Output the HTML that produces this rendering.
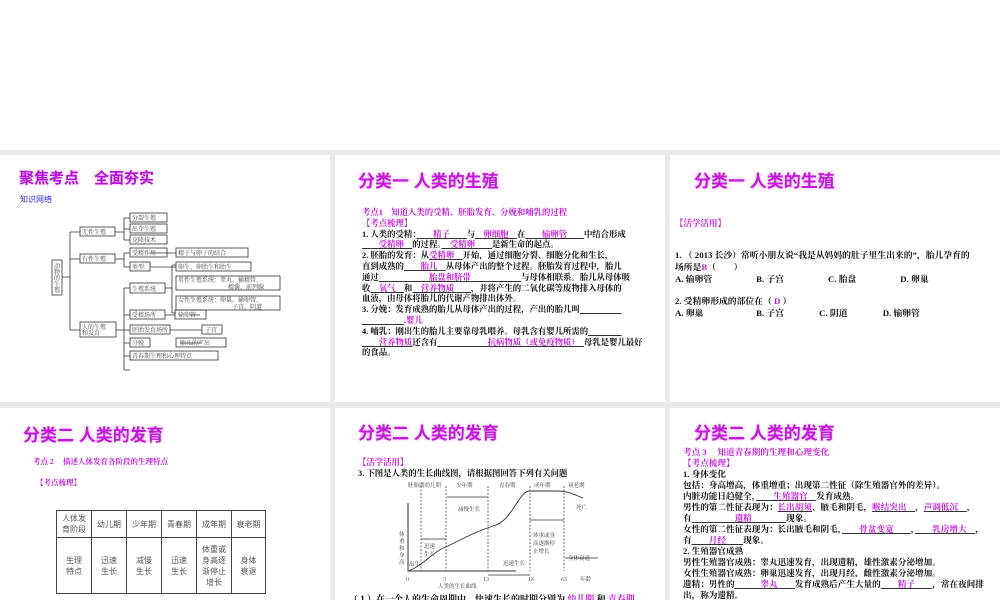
<!DOCTYPE html>
<html><head><meta charset="utf-8"><style>
*{margin:0;padding:0;box-sizing:border-box}
body{width:1000px;height:600px;overflow:hidden;background:#fff;position:relative;font-family:"Liberation Serif","Noto Serif CJK SC",serif}
.band{position:absolute;left:0;top:150px;width:1000px;height:450px;background:#e9e9e9}
.s{position:absolute;background:#fff;overflow:hidden}
.t{position:absolute;font-family:"Liberation Sans","Noto Sans CJK SC",sans-serif;font-weight:bold;color:#c21ad8;font-size:17px;text-shadow:0 0 3px #e9a6f2;white-space:nowrap}
.p{position:absolute;font-size:8.6px;line-height:10.8px;color:#111;white-space:nowrap;font-weight:bold}
.m{color:#c21ad8}
u{color:#c21ad8;text-decoration-color:#333}
.mm text{font-size:6px;font-family:"Noto Serif CJK SC",serif}
</style></head><body>
<div class="band"></div>

<div class="s" style="left:0;top:155px;width:330px;height:247px">
 <div class="t" style="left:19px;top:12px;color:#b512d6;font-size:15px">聚焦考点　全面夯实</div>
 <div style="position:absolute;left:20px;top:39px;font-size:8px;color:#2a2ad0;font-family:'Noto Sans CJK SC',sans-serif">知识网络</div>
 <svg class="mm" style="position:absolute;left:0;top:0" width="330" height="247" fill="none" stroke="#333" stroke-width="0.8">
 <g transform="translate(0,-13)">
  <rect x="52" y="118" width="10" height="35"/>
  <path d="M62 135H70M70 90V188M70 90H80M70 117H80M70 188H80M115 90H124M124 76V98M124 76H130M124 87H130M124 98H130M115 117H124M124 111V125M124 111H130M124 125H130M150 111H176M150 125H176M116 188H124M124 146V228M124 146H130M124 173H130M124 188H130M124 201H130M124 214H130M124 228H130M165 146H172M172 123V171M172 123H176M172 171H176M165 173H175M190 173H200M170 188H202M180 201H202"/>
  <g stroke="#333">
  <rect x="130" y="71" width="37" height="9"/><rect x="130" y="82" width="37" height="9"/><rect x="130" y="93" width="37" height="9"/>
  <rect x="80" y="85" width="35" height="9"/><rect x="80" y="112" width="35" height="9"/>
  <rect x="130" y="106" width="37" height="9"/><rect x="176" y="106" width="72" height="9"/>
  <rect x="130" y="120" width="20" height="9"/><rect x="176" y="120" width="75" height="9"/>
  <rect x="176" y="134" width="104" height="14"/><rect x="176" y="154" width="104" height="14"/>
  <rect x="130" y="141" width="35" height="10"/>
  <rect x="130" y="168" width="35" height="9"/><rect x="175" y="168" width="31" height="9"/>
  <rect x="80" y="180" width="36" height="15"/>
  <rect x="130" y="183" width="40" height="9"/><rect x="202" y="183" width="20" height="9"/>
  <rect x="130" y="196" width="20" height="9"/><rect x="176" y="196" width="50" height="9"/>
  <rect x="130" y="209" width="88" height="9"/>
  </g>
  <g fill="#444" stroke="none">
  <text x="54" y="126" font-size="5">动</text><text x="54" y="132" font-size="5">物</text><text x="54" y="138" font-size="5">的</text><text x="54" y="144" font-size="5">生</text><text x="54" y="150" font-size="5">殖</text>
  <text x="82" y="92">无性生殖</text><text x="82" y="119">有性生殖</text>
  <text x="132" y="78">分裂生殖</text><text x="132" y="89">出芽生殖</text><text x="132" y="100">克隆技术</text>
  <text x="132" y="113">受精作用</text><text x="178" y="113">精子与卵子的结合</text>
  <text x="132" y="127">类型</text><text x="178" y="127">卵生、卵胎生和胎生</text>
  <text x="178" y="140" font-size="5">男性生殖系统：睾丸、输精管、</text><text x="228" y="147" font-size="5">精囊、前列腺</text>
  <text x="178" y="160" font-size="5">女性生殖系统：卵巢、输卵管、</text><text x="232" y="167" font-size="5">子宫、阴道</text>
  <text x="132" y="149">生殖系统</text><text x="132" y="175">受精场所</text><text x="178" y="175">输卵管</text>
  <text x="82" y="187" font-size="5">人的生殖</text><text x="82" y="193" font-size="5">和发育</text>
  <text x="132" y="190">胚胎发育场所</text><text x="205" y="190">子宫</text>
  <text x="132" y="203">分娩</text><text x="180" y="203">胎儿的产出</text>
  <text x="132" y="216">青春期生理和心理特点</text>
  </g>
 </g>
 </svg>
</div>

<div class="s" style="left:335px;top:155px;width:330px;height:247px">
 <div class="t" style="left:23px;top:12px">分类一 人类的生殖</div>
 <div class="p" style="left:27px;top:53px;font-size:8.4px"><span class="m">考点1　知道人类的受精、胚胎发育、分娩和哺乳的过程</span><br><span class="m">【考点梳理】</span><br>
1. 人类的受精：<u>　　精子　　</u>与<u>　卵细胞　</u>在<u>　　输卵管　　</u>中结合形成<br>
<u>　　受精卵　</u>的过程。<u>　受精卵　　</u>是新生命的起点。<br>
2. 胚胎的发育：从<u>受精卵　</u>开始，通过细胞分裂、细胞分化和生长，<br>
直到成熟的<u>　　胎儿　</u>从母体产出的整个过程。胚胎发育过程中，胎儿<br>
通过<u>　　　　　　胎盘和脐带　　　　　　</u>与母体相联系。胎儿从母体吸<br>
收<u>　氧气　</u>和<u>　营养物质　　</u>，并将产生的二氧化碳等废物排入母体的<br>
血液，由母体将胎儿的代谢产物排出体外。<br>
3. 分娩：发育成熟的胎儿从母体产出的过程，产出的胎儿叫<u>　　　　　</u><br>
<u>　　　　　</u>.<span class="m">婴儿</span><br>
4. 哺乳：刚出生的胎儿主要靠母乳喂养。母乳含有婴儿所需的<u>　　　　</u><br>
<u>　　营养物质</u>还含有<u>　　　　　　抗病物质（或免疫物质）　</u>母乳是婴儿最好<br>
的食品。</div>
</div>

<div class="s" style="left:670px;top:155px;width:330px;height:247px">
 <div class="t" style="left:24px;top:12px">分类一 人类的生殖</div>
 <div class="p m" style="left:5px;top:63px;font-size:8.5px">【活学活用】</div>
 <div class="p" style="left:5px;top:94px;font-size:8.8px;line-height:12px">1. （ 2013 长沙）常听小朋友说“我是从妈妈的肚子里生出来的”，胎儿孕育的<br>
场所是<span class="m">B</span>（　　）<br>
A. 输卵管　　　　　B. 子宫　　　　　C. 胎盘　　　　　D. 卵巢</div>
 <div class="p" style="left:5px;top:140px;font-size:8.8px;line-height:12px">2. 受精卵形成的部位在（ <span class="m">D</span> ）<br>
A. 卵巢　　　　　　B. 子宫　　　　C. 阴道　　　　D. 输卵管</div>
</div>

<div class="s" style="left:0;top:408px;width:330px;height:192px">
 <div class="t" style="left:23px;top:13px">分类二 人类的发育</div>
 <div class="p m" style="left:33px;top:49px;font-size:7.5px">考点 2　 描述人体发育各阶段的生理特点</div>
 <div class="p m" style="left:36px;top:70px;font-size:7.5px">【考点梳理】</div>
 <table style="position:absolute;left:56px;top:102px;border-collapse:collapse;font-family:'Noto Sans CJK SC',sans-serif;font-size:8px;color:#555;text-align:center;line-height:11px">
  <tr style="height:27px"><td style="border:1px solid #444;width:35px">人体发<br>育阶段</td><td style="border:1px solid #444;width:35px">幼儿期</td><td style="border:1px solid #444;width:35px">少年期</td><td style="border:1px solid #444;width:35px">青春期</td><td style="border:1px solid #444;width:35px">成年期</td><td style="border:1px solid #444;width:34px">衰老期</td></tr>
  <tr style="height:56px"><td style="border:1px solid #444">生理<br>特点</td><td style="border:1px solid #444">迅速<br>生长</td><td style="border:1px solid #444">减慢<br>生长</td><td style="border:1px solid #444">迅速<br>生长</td><td style="border:1px solid #444">体重或<br>身高逐<br>渐停止<br>增长</td><td style="border:1px solid #444">身体<br>衰退</td></tr>
 </table>
</div>

<div class="s" style="left:335px;top:408px;width:330px;height:192px">
 <div class="t" style="left:23px;top:11px">分类二 人类的发育</div>
 <div class="p" style="left:23px;top:49px;font-size:8.4px;line-height:11px"><span class="m">【活学活用】</span><br>3. 下图是人类的生长曲线图，请根据图回答下列有关问题</div>
 <svg style="position:absolute;left:0;top:0" width="330" height="192" fill="none" stroke="#333" stroke-width="0.7" font-family="Noto Serif CJK SC,serif" font-size="5.5">
 <g transform="translate(33,-2)">
  <path d="M40 97V165H148" stroke-width="1"/>
  <path d="M53 80V165M78 80V165M120 80V165M162 80V165M196 80V165" stroke-dasharray="2,1.5"/>
  <path d="M40 165C55 160 65 145 80 140C100 130 110 125 125 120C145 115 150 85 162 85H190C200 85 205 88 215 92" stroke-width="0.9"/>
  <path d="M79 91H120M53 133H78M120 169H162M162 114H196M197 152H230"/>
  <g fill="#333" stroke="none">
  <text x="40" y="81">胚胎期幼儿期</text><text x="88" y="81">少年期</text><text x="131" y="81">青春期</text><text x="166" y="81">成年期</text><text x="200" y="81">衰老期</text>
  <text x="90" y="105">减慢生长</text><text x="56" y="142">迅速</text><text x="56" y="150">生长</text>
  <text x="135" y="159">迅速生长</text><text x="165" y="131">体重或身</text><text x="165" y="139">高逐渐停</text><text x="165" y="147">止增长</text>
  <text x="200" y="154">身体衰退</text><text x="208" y="103">死亡</text>
  <text x="31" y="130">体</text><text x="31" y="137">重</text><text x="31" y="144">和</text><text x="31" y="151">身</text><text x="31" y="158">高</text>
  <text x="41" y="160">出生</text>
  <text x="38" y="175">0</text><text x="75" y="175">3</text><text x="115" y="175">13</text><text x="160" y="175">18</text><text x="193" y="175">65</text><text x="212" y="175">年龄</text>
  <text x="70" y="182">人类的生长曲线</text>
  </g>
 </g>
 </svg>
 <div class="p" style="left:14px;top:186px;font-size:9px">（ 1 ）在一个人的生命周期中，快速生长的时期分别为 <u>幼儿期</u> 和 <u>青春期</u></div>
</div>

<div class="s" style="left:670px;top:408px;width:330px;height:192px">
 <div class="t" style="left:24px;top:11px">分类二 人类的发育</div>
 <div class="p" style="left:13px;top:39px;font-size:8.6px;line-height:11px"><span class="m">考点 3　 知道青春期的生理和心理变化</span><br><span class="m">【考点梳理】</span><br>
1. 身体变化<br>
包括：身高增高，体重增重；出现第二性征（除生殖器官外的差异）。<br>
内脏功能日趋健全，<u>　　生殖器官　</u>发育成熟。<br>
男性的第二性征表现为：<u>长出胡须</u>、腋毛和阴毛，<u>喉结突出　</u>，<u>声调低沉　</u>，<br>
有<u>　　　　　遗精　　　　</u>现象。<br>
女性的第二性征表现为：长出腋毛和阴毛，<u>　　骨盆变宽　　</u>，<u>　　乳房增大　</u>，<br>
有<u>　　月经　　</u>现象。<br>
2. 生殖器官成熟<br>
男性生殖器官成熟：睾丸迅速发育，出现遗精，雄性激素分泌增加。<br>
女性生殖器官成熟：卵巢迅速发育，出现月经，雌性激素分泌增加。<br>
遗精：男性的<u>　　　睾丸　　</u>发育成熟后产生大量的<u>　　精子　　</u>，常在夜间排<br>
出，称为遗精。</div>
</div>
</body></html>
